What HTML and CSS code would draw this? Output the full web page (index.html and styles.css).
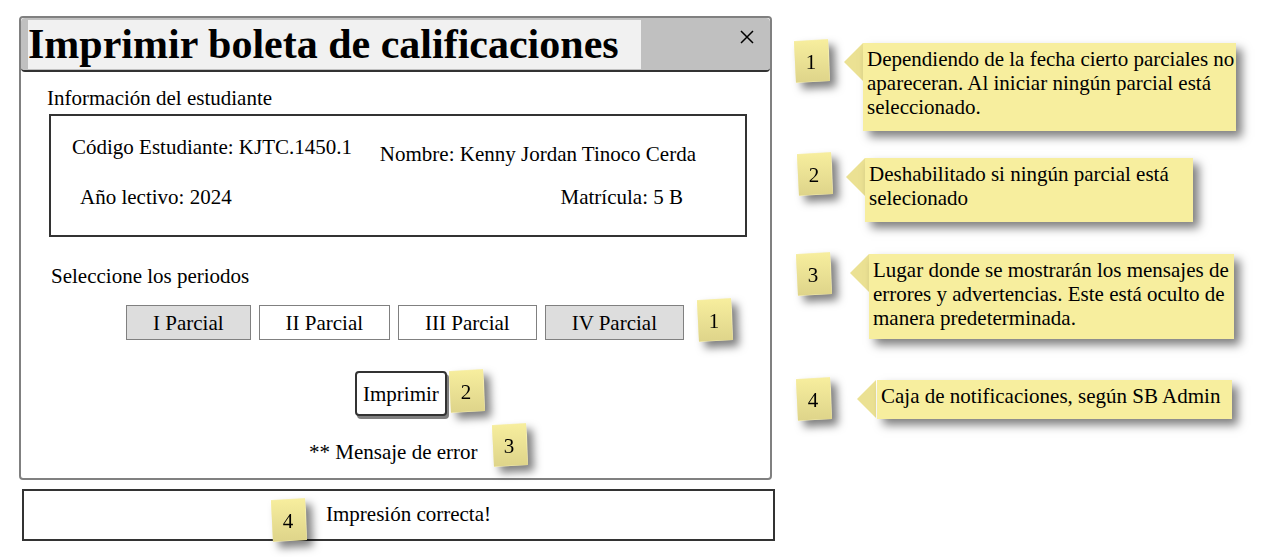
FILE: index.html
```html
<!DOCTYPE html>
<html lang="es">
<head>
<meta charset="utf-8">
<meta name="viewport" content="width=device-width, initial-scale=1">
<title>Imprimir boleta de calificaciones</title>
<link rel="stylesheet" href="styles.css">
</head>
<body>
<svg class="defs" width="0" height="0" aria-hidden="true">
  <defs>
    <linearGradient id="paper" x1="0" y1="0" x2="0" y2="1">
      <stop offset="0" stop-color="#f7ee9e"/>
      <stop offset="1" stop-color="#ded48a"/>
    </linearGradient>
    <symbol id="note" viewBox="0 0 36 44">
      <path fill="#f7f0b8" d="M0 2 34 0 35 12 36 42 2 44z"/>
      <path fill="url(#paper)" d="M0 2.500 34 .5 34.500 20 35 31 36 42 20 42.500 2 43.500z"/>
    </symbol>
  </defs>
</svg>
<div class="page">
  <main class="screen">
    <section class="dialog" aria-labelledby="title">
      <header class="titlebar">
        <h1 class="title" id="title">Imprimir boleta de calificaciones</h1>
        <button class="close" type="button" aria-label="Cerrar">
          <svg width="14" height="14" viewBox="0 0 14 14" aria-hidden="true"><path d="M1 1 13 13M13 1 1 13" stroke="#000" stroke-width="1.5"/></svg>
        </button>
      </header>
      <h2 class="label">Información del estudiante</h2>
      <div class="student">
        <div class="row row-top">
          <span>Código Estudiante: KJTC.1450.1</span>
          <span class="name">Nombre: Kenny Jordan Tinoco Cerda</span>
        </div>
        <div class="row row-bottom">
          <span>Año lectivo: 2024</span>
          <span>Matrícula: 5 B</span>
        </div>
      </div>
      <h2 class="label label-periods">Seleccione los periodos</h2>
      <div class="periods">
        <button class="period selected" type="button" aria-pressed="true">I Parcial</button>
        <button class="period" type="button" aria-pressed="false">II Parcial</button>
        <button class="period" type="button" aria-pressed="false">III Parcial</button>
        <button class="period selected" type="button" aria-pressed="true">IV Parcial</button>
        <svg class="sticky" viewBox="0 0 36 44"><use href="#note"/><text x="17" y="30">1</text></svg>
      </div>
      <div class="actions">
        <button class="print" type="button">Imprimir</button>
        <svg class="sticky" viewBox="0 0 36 44"><use href="#note"/><text x="17" y="30">2</text></svg>
      </div>
      <div class="error">
        <p class="message">** Mensaje de error</p>
        <svg class="sticky" viewBox="0 0 36 44"><use href="#note"/><text x="17" y="30">3</text></svg>
      </div>
    </section>
    <section class="notice">
      <svg class="sticky" viewBox="0 0 36 44"><use href="#note"/><text x="17" y="30">4</text></svg>
      <p class="message">Impresión correcta!</p>
    </section>
  </main>
  <aside class="notes">
    <div class="note note-1">
      <svg class="sticky" viewBox="0 0 36 44"><use href="#note"/><text x="17" y="30">1</text></svg>
      <svg class="arrow" viewBox="0 0 19 38"><path d="M19 0V38L0 19z"/></svg>
      <p class="bubble">Dependiendo de la fecha cierto parciales no apareceran. Al iniciar ningún parcial está seleccionado.</p>
    </div>
    <div class="note note-2">
      <svg class="sticky" viewBox="0 0 36 44"><use href="#note"/><text x="17" y="30">2</text></svg>
      <svg class="arrow" viewBox="0 0 19 38"><path d="M19 0V38L0 19z"/></svg>
      <p class="bubble">Deshabilitado si ningún parcial está selecionado</p>
    </div>
    <div class="note note-3">
      <svg class="sticky" viewBox="0 0 36 44"><use href="#note"/><text x="17" y="30">3</text></svg>
      <svg class="arrow" viewBox="0 0 19 38"><path d="M19 0V38L0 19z"/></svg>
      <p class="bubble">Lugar donde se mostrarán los mensajes de errores y advertencias. Este está oculto de manera predeterminada.</p>
    </div>
    <div class="note note-4">
      <svg class="sticky" viewBox="0 0 36 44"><use href="#note"/><text x="17" y="30">4</text></svg>
      <svg class="arrow" viewBox="0 0 19 38"><path d="M19 0V38L0 19z"/></svg>
      <p class="bubble">Caja de notificaciones, según SB Admin</p>
    </div>
  </aside>
</div>
</body>
</html>
```
FILE: styles.css
```css
* {
  box-sizing: border-box;
}

body {
  margin: 0;
  background: #fff;
  color: #000;
  font: 21px/24px "Liberation Serif", "Times New Roman", serif;
}

h1, h2, p {
  margin: 0;
}

button {
  font: inherit;
  color: inherit;
}

.defs {
  display: block;
}

.page {
  display: grid;
  grid-template-columns: minmax(0, 756fr) minmax(0, 447fr);
  column-gap: 19px;
  align-items: start;
  padding: 16px 29px 16px 19px;
}

.sticky {
  flex: none;
  width: 36px;
  height: 44px;
  overflow: visible;
  filter: drop-shadow(6px 6px 4px rgba(0, 0, 0, 0.5));
}

.sticky text {
  text-anchor: middle;
}

/* Dialog */

.dialog {
  margin-right: 3px;
  padding-bottom: 11px;
  border: 2px solid #808080;
  border-radius: 4px;
}

.titlebar {
  display: flex;
  justify-content: space-between;
  align-items: flex-start;
  padding: 2px 16px 1px 7px;
  background: #c0c0c0;
  border-bottom: 2px solid #333;
  border-radius: 4px;
}

.title {
  padding: 0 22px 0 0;
  background: #f1f1f1;
  font-size: 42px;
  line-height: 49px;
  font-weight: bold;
}

.close {
  display: flex;
  margin-top: 10px;
  padding: 0;
  border: 0;
  background: none;
}

.label {
  margin: 14px 0 0 26px;
  font-size: inherit;
  font-weight: normal;
}

.student {
  display: flex;
  flex-direction: column;
  gap: 19px;
  margin: 4px 23px 0 28px;
  padding: 19px 0 26px;
  border: 2px solid #333;
}

.row {
  display: flex;
  justify-content: space-between;
}

.row-top {
  padding: 0 49px 0 21px;
}

.row-bottom {
  padding: 0 62px 0 29px;
}

.name {
  padding-top: 7px;
}

.label-periods {
  margin: 27px 0 0 30px;
}

.periods {
  display: flex;
  align-items: center;
  gap: 8px;
  margin-top: 10px;
  padding-left: 105px;
}

.period {
  margin-top: 5px;
  padding: 5px 26px 4px;
  border: 1px solid #808080;
  background: #fff;
}

.selected {
  background: #ddd;
}

.periods .sticky {
  margin-left: 5px;
}

.actions {
  display: flex;
  align-items: flex-start;
  gap: 2px;
  margin-top: 27px;
  padding-left: 334px;
}

.print {
  margin-top: 2px;
  padding: 9px 6px 8px;
  border: 2px solid #333;
  border-radius: 4px;
  background: #fff;
  box-shadow: 2px 3px 0 #808080;
}

.error {
  display: flex;
  align-items: flex-start;
  gap: 14px;
  margin-top: 7px;
  padding-left: 288px;
}

.error .message {
  padding-top: 17px;
}

/* Notification box */

.notice {
  display: flex;
  align-items: flex-start;
  gap: 19px;
  margin: 9px 0 0 3px;
  padding: 7px 0 0 247px;
  border: 2px solid #333;
}

.notice .sticky {
  margin-bottom: -3px;
}

.notice .message {
  padding-top: 4px;
}

/* Annotations */

.notes {
  padding-top: 23px;
}

.note {
  display: flex;
  align-items: flex-start;
}

.arrow {
  flex: none;
  width: 19px;
  height: 38px;
  fill: #ebe193;
}

.bubble {
  flex: 1;
  min-width: 0;
  padding: 4px 0 12px 4px;
  background: #f7ee9e;
  box-shadow: 6px 6px 9px rgba(0, 0, 0, 0.5);
}

.note-1 { padding-right: 5px; }
.note-1 .arrow { margin-left: 14px; }
.note-1 .arrow, .note-1 .bubble { margin-top: 4px; }

.note-2 { margin-top: 21px; padding: 0 48px 0 3px; }
.note-2 .arrow { margin-left: 13px; }
.note-2 .arrow, .note-2 .bubble { margin-top: 6px; }

.note-3 { margin-top: 30px; padding: 0 7px 0 2px; }
.note-3 .arrow { margin-left: 18px; }
.note-3 .arrow, .note-3 .bubble { margin-top: 2px; }
.note-3 .bubble { padding-bottom: 9px; }

.note-4 { margin-top: 38px; padding: 0 9px 0 2px; }
.note-4 .arrow { margin: 0 1px 0 25px; }
.note-4 .arrow, .note-4 .bubble { margin-top: 3px; }
.note-4 .bubble { padding-bottom: 11px; }
```
